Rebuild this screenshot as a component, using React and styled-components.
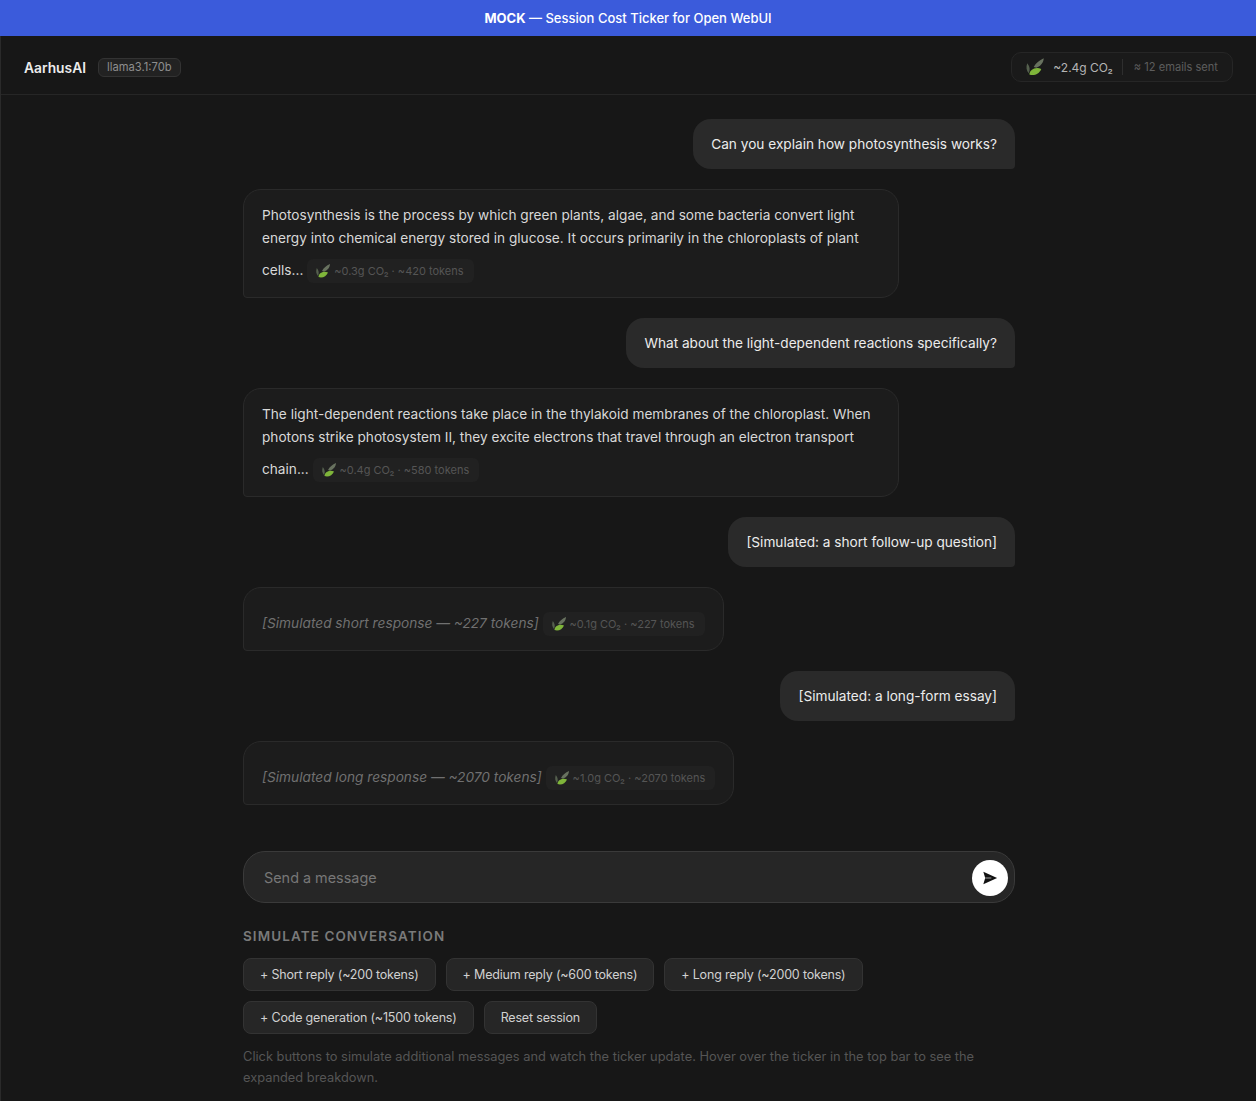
import React from 'react'
import styled, { createGlobalStyle } from 'styled-components'

const GlobalStyle = createGlobalStyle`
  html, body {
    margin: 0;
    padding: 0;
    background: #171717;
  }
  body {
    font-family: Inter, "Noto Sans", "Liberation Sans", sans-serif;
    color: #ececec;
  }
  * {
    box-sizing: border-box;
  }
`

const Page = styled.div`
  min-height: 1101px;
  background: #171717;
  border-left: 1px solid #2a2a2a;
`

const Banner = styled.div`
  height: 36px;
  margin-left: -1px;
  background: #3b5bdb;
  color: #fff;
  font-size: 13px;
  font-weight: 500;
  line-height: 37px;
  text-align: center;

  strong {
    font-weight: 700;
  }
`

const TopBar = styled.header`
  display: flex;
  align-items: center;
  justify-content: space-between;
  height: 59px;
  padding: 5px 23px 0;
  border-bottom: 1px solid #262626;
`

const Brand = styled.div`
  display: flex;
  align-items: center;
  gap: 12px;
`

const BrandName = styled.span`
  font-size: 13.8px;
  font-weight: 600;
  color: #ececec;
`

const ModelTag = styled.span`
  padding: 1px 8px;
  border: 1px solid #333;
  border-radius: 6px;
  background: #222;
  color: #8e8e8e;
  font-size: 11.2px;
  line-height: 15px;
`

const Ticker = styled.div`
  display: flex;
  align-items: center;
  height: 30px;
  margin-bottom: 1px;
  padding: 0 14px 0 13px;
  border: 1px solid #262626;
  border-radius: 10px;
  background: #1a1a1a;
`

const TickerValue = styled.span`
  margin-left: 8px;
  color: #b4b4b4;
  font-size: 12px;
`

const TickerDivider = styled.span`
  width: 1px;
  height: 16px;
  margin: 0 11px 0 9px;
  background: #2e2e2e;
`

const TickerNote = styled.span`
  color: #5d5d5d;
  font-size: 11.1px;
`

const Column = styled.main`
  width: 772px;
  margin-left: 242px;
  padding-top: 24px;
`

const Thread = styled.div`
  display: flex;
  flex-direction: column;
  gap: 20px;
`

const UserBubble = styled.div`
  align-self: flex-end;
  height: 50px;
  padding: 0 18px;
  border-radius: 18px 18px 4px 18px;
  background: #2a2a2a;
  color: #ececec;
  font-size: 13.65px;
  line-height: 50px;
`

const AssistantBubble = styled.div`
  align-self: flex-start;
  max-width: 656px;
  padding: ${p => (p.$muted ? '15px 18px 14px' : '14px 18px')};
  border: 1px solid #2a2a2a;
  border-radius: 18px 18px 18px 4px;
  background: #1c1c1c;
  color: ${p => (p.$muted ? '#707070' : '#d8d8d8')};
  font-size: ${p => (p.$muted ? '13.7px' : '13.65px')};
  font-style: ${p => (p.$muted ? 'italic' : 'normal')};
  line-height: 23px;
`

const CostChip = styled.span`
  display: inline-flex;
  align-items: baseline;
  gap: 3px;
  height: 24px;
  margin-top: 9px;
  padding: 0 10px 0 8px;
  border-radius: 6px;
  background: #212121;
  color: #555;
  font-size: 11px;
  font-style: normal;
  line-height: 24px;

  svg {
    align-self: center;
  }
`

const Composer = styled.div`
  display: flex;
  align-items: center;
  justify-content: space-between;
  height: 52px;
  margin-top: 46px;
  padding: 0 6px 0 20px;
  border: 1px solid #3a3a3a;
  border-radius: 22px;
  background: #262626;
`

const ComposerHint = styled.span`
  color: #777;
  font-size: 14.4px;
`

const SendButton = styled.button`
  display: flex;
  align-items: center;
  justify-content: center;
  width: 36px;
  height: 36px;
  margin-top: 2px;
  padding: 0;
  border: 0;
  border-radius: 50%;
  background: #fff;
`

const Controls = styled.section`
  margin-top: 25px;
`

const ControlsTitle = styled.h3`
  margin: 0 0 13px;
  color: #7a7a7a;
  font-size: 13.5px;
  font-weight: 600;
  letter-spacing: 0.08em;
  line-height: 17px;
  text-transform: uppercase;
`

const ButtonRow = styled.div`
  display: flex;
  flex-wrap: wrap;
  gap: 10px;
`

const SimButton = styled.button`
  height: 33px;
  padding: 0 16px;
  border: 1px solid #333;
  border-radius: 8px;
  background: #262626;
  color: #d1d1d1;
  font-family: inherit;
  font-size: 12.5px;
  letter-spacing: -0.18px;
`

const HelpText = styled.p`
  margin: 12px 0 0;
  color: #555;
  font-size: 12.85px;
  line-height: 21px;
`

const Leaf = ({ size = 16 }) => (
  <svg width={size} height={size} viewBox='0 0 16 16' aria-hidden='true'>
    <path d='M7 8C8.5 5 11.5 2.5 15 1 14.8 4.5 12.5 7.5 9 8.5Z' fill='#68725f' />
    <path d='M3.5 14C3.5 10.5 8 7.5 13 9.5 11.5 13.5 7 15.5 3.5 14Z' fill='#7fb53a' />
    <path d='M1.8 5C.6 8 1.2 11 3 13 4.2 10.5 4 7.5 1.8 5Z' fill='#55604e' />
  </svg>
)

const Chip = ({ co2, tokens }) => (
  <CostChip>
    <Leaf />
    <span>{`~${co2}g CO₂ · ~${tokens} tokens`}</span>
  </CostChip>
)

const buttons = [
  '+ Short reply (~200 tokens)',
  '+ Medium reply (~600 tokens)',
  '+ Long reply (~2000 tokens)',
  '+ Code generation (~1500 tokens)',
  'Reset session',
]

export default function App() {
  return (
    <Page>
      <GlobalStyle />
      <Banner>
        <strong>MOCK</strong> — Session Cost Ticker for Open WebUI
      </Banner>
      <TopBar>
        <Brand>
          <BrandName>AarhusAI</BrandName>
          <ModelTag>llama3.1:70b</ModelTag>
        </Brand>
        <Ticker>
          <Leaf size={20} />
          <TickerValue>~2.4g CO₂</TickerValue>
          <TickerDivider />
          <TickerNote>≈ 12 emails sent</TickerNote>
        </Ticker>
      </TopBar>
      <Column>
        <Thread>
          <UserBubble>Can you explain how photosynthesis works?</UserBubble>
          <AssistantBubble>
            Photosynthesis is the process by which green plants, algae, and some bacteria convert light
            energy into chemical energy stored in glucose. It occurs primarily in the chloroplasts of plant
            cells... <Chip co2='0.3' tokens='420' />
          </AssistantBubble>
          <UserBubble>What about the light-dependent reactions specifically?</UserBubble>
          <AssistantBubble>
            The light-dependent reactions take place in the thylakoid membranes of the chloroplast. When
            photons strike photosystem II, they excite electrons that travel through an electron transport
            chain... <Chip co2='0.4' tokens='580' />
          </AssistantBubble>
          <UserBubble>[Simulated: a short follow-up question]</UserBubble>
          <AssistantBubble $muted>
            [Simulated short response — ~227 tokens] <Chip co2='0.1' tokens='227' />
          </AssistantBubble>
          <UserBubble>[Simulated: a long-form essay]</UserBubble>
          <AssistantBubble $muted>
            [Simulated long response — ~2070 tokens] <Chip co2='1.0' tokens='2070' />
          </AssistantBubble>
        </Thread>
        <Composer>
          <ComposerHint>Send a message</ComposerHint>
          <SendButton aria-label='Send'>
            <svg width='16' height='16' viewBox='0 0 18 18' aria-hidden='true'>
              <path d='M1.5 2 17 9 1.5 16 3.6 9Z' fill='#111' />
              <path d='M3.6 8.2H10.5V9.8H3.6Z' fill='#777' />
            </svg>
          </SendButton>
        </Composer>
        <Controls>
          <ControlsTitle>Simulate conversation</ControlsTitle>
          <ButtonRow>
            {buttons.map(label => (
              <SimButton key={label}>{label}</SimButton>
            ))}
          </ButtonRow>
          <HelpText>
            Click buttons to simulate additional messages and watch the ticker update. Hover over the ticker in
            the top bar to see the expanded breakdown.
          </HelpText>
        </Controls>
      </Column>
    </Page>
  )
}
